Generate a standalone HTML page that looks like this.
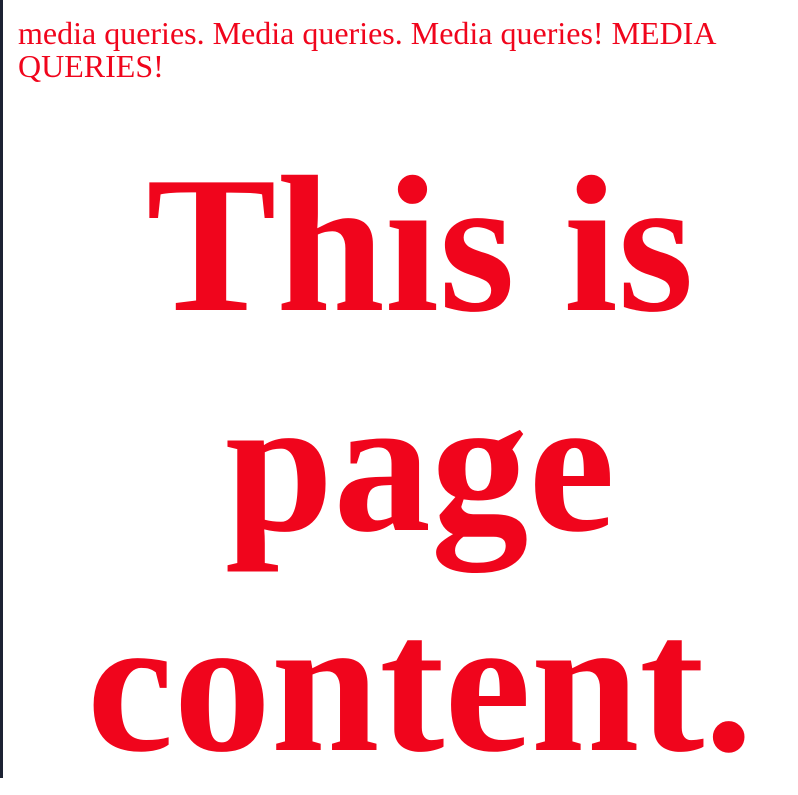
<!DOCTYPE html>
<html><head><style>
html,body{margin:0;padding:0;background:#fff;}
body{width:798px;height:778px;overflow:hidden;position:relative;font-family:"Liberation Serif",serif;color:#f0051c;}
.bar{position:absolute;left:0;top:0;width:3px;height:778px;background:#1c2233;}
.top{position:absolute;left:18px;top:17px;width:740px;font-size:32px;line-height:33px;}
.big{position:absolute;left:20px;width:800px;top:135px;text-align:center;font-weight:bold;font-size:195px;line-height:220px;}
</style></head><body>
<div class="bar"></div>
<div class="top">media queries. Media queries. Media queries! MEDIA QUERIES!</div>
<div class="big">This is<br>page<br>content.</div>
</body></html>
